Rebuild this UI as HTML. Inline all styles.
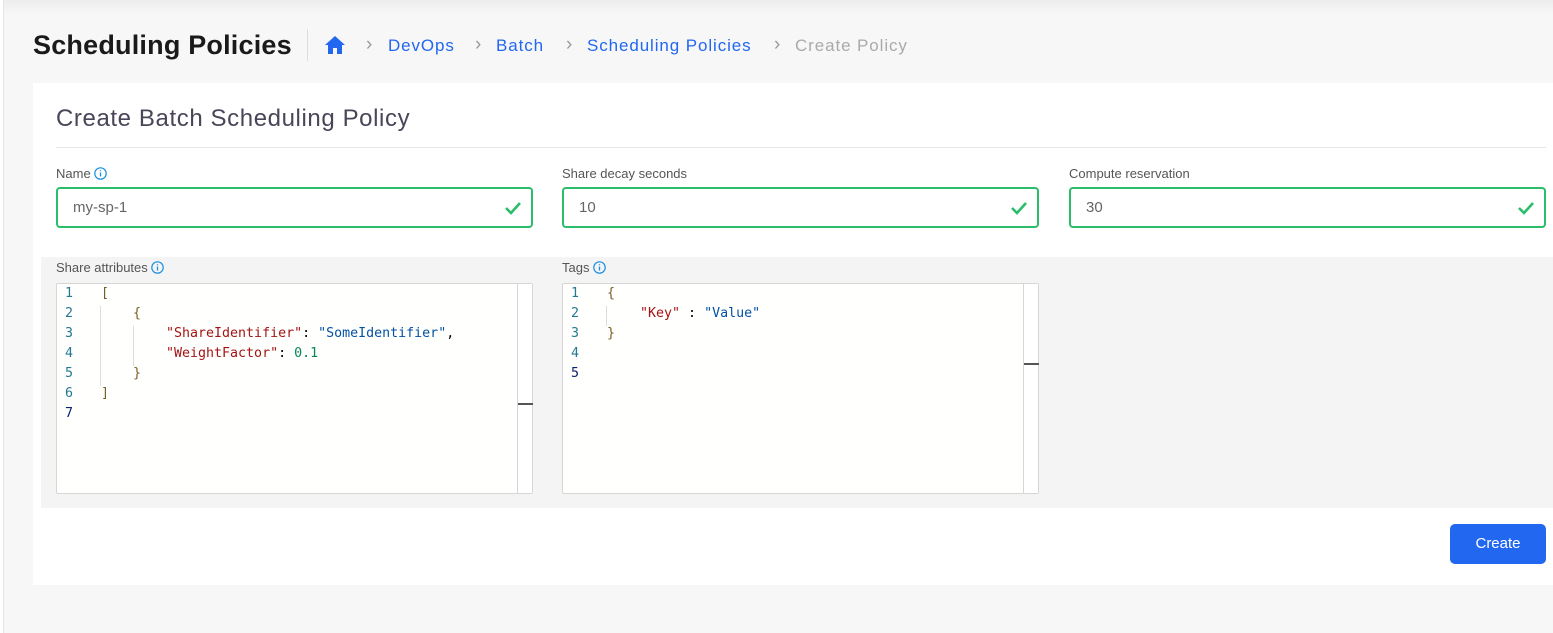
<!DOCTYPE html>
<html><head><meta charset="utf-8"><style>
*{box-sizing:border-box;margin:0;padding:0}
body{width:1553px;height:633px;background:#f7f7f7;font-family:"Liberation Sans",sans-serif;position:relative;overflow:hidden}
.leftb{position:absolute;left:0;top:0;width:4px;height:633px;background:#fff;border-right:1px solid #e6e6e6}
.topsh{position:absolute;left:4px;top:0;right:0;height:14px;background:linear-gradient(#ececec,#f7f7f7)}
.abs{position:absolute}
h1{position:absolute;left:33px;top:30px;font-size:27px;font-weight:bold;color:#1a1a1a;letter-spacing:0.2px}
.sep{position:absolute;left:307px;top:29px;width:1px;height:32px;background:#ddd}
.bc{position:absolute;top:36px;font-size:17px;color:#2167f0;letter-spacing:0.9px}
.chev{position:absolute;top:34px;font-size:19px;color:#999}
.card{position:absolute;left:33px;top:83px;width:1520px;height:502px;background:#fff}
.ct{position:absolute;left:56px;top:105px;font-size:24px;color:#4a4558;letter-spacing:0.6px}
.hr{position:absolute;left:56px;top:147px;width:1490px;height:1px;background:#e6e6e6}
.lbl{position:absolute;font-size:13px;color:#555}
.inp{position:absolute;top:187px;width:477px;height:41px;border:2px solid #2bbd6a;border-radius:4px;font-size:15px;color:#666;padding:10px 0 0 15px}
.inp svg{position:absolute;right:9px;top:11px}
.gray{position:absolute;left:41px;top:257px;width:1512px;height:251px;background:#f4f4f4}
.ed{position:absolute;top:283px;width:477px;height:211px;background:#fffffd;border:1px solid #d6d6d6;border-radius:2px;font-family:"DejaVu Sans Mono","Liberation Mono",monospace;font-size:13.3px}
.sb{position:absolute;right:0;top:0;width:15px;height:100%;border-left:1px solid #d6d6d6;background:#fff}
.sb i{position:absolute;left:0;width:15px;height:2px;background:#555}
.ln{position:absolute;left:8px;color:#237893;top:0}
.cd{position:absolute;white-space:pre;color:#000}
.k{color:#a31515}.s{color:#0451a5}.n{color:#098658}.b{color:#795e26}
.guide{position:absolute;width:1px;background:#ddd}
.btn{position:absolute;left:1450px;top:524px;width:96px;height:40px;background:#2167f0;border-radius:5px;color:#fff;font-size:15px;text-align:center;line-height:40px}
</style></head><body>
<div class="leftb"></div><div class="topsh"></div>
<h1>Scheduling Policies</h1>
<div class="sep"></div>
<svg class="abs" style="left:324px;top:35px" width="22" height="20" viewBox="0 0 22 20"><path d="M11 1L1 10h3v9h5v-6h4v6h5v-9h3z" fill="#2167f0"/></svg>
<span class="chev" style="left:366px">›</span><span class="bc" style="left:388px">DevOps</span>
<span class="chev" style="left:475px">›</span><span class="bc" style="left:496px">Batch</span>
<span class="chev" style="left:566px">›</span><span class="bc" style="left:587px">Scheduling Policies</span>
<span class="chev" style="left:774px">›</span><span class="bc" style="left:795px;color:#aaa">Create Policy</span>
<div class="card"></div>
<div class="ct">Create Batch Scheduling Policy</div>
<div class="hr"></div>
<div class="lbl" style="left:56px;top:166px">Name <svg width="13" height="13" viewBox="0 0 13 13" style="vertical-align:-2px"><circle cx="6.5" cy="6.5" r="5.7" fill="none" stroke="#1a8fe0" stroke-width="1.2"/><path d="M6.5 5.5v4M6.5 3.3v1" stroke="#1a8fe0" stroke-width="1.3"/></svg></div>
<div class="lbl" style="left:562px;top:166px">Share decay seconds</div>
<div class="lbl" style="left:1069px;top:166px">Compute reservation</div>
<div class="inp" style="left:56px">my-sp-1<svg width="18" height="16" viewBox="0 0 18 16"><path d="M2 8l5 5L16 3" fill="none" stroke="#2bbd6a" stroke-width="2.6"/></svg></div>
<div class="inp" style="left:562px">10<svg width="18" height="16" viewBox="0 0 18 16"><path d="M2 8l5 5L16 3" fill="none" stroke="#2bbd6a" stroke-width="2.6"/></svg></div>
<div class="inp" style="left:1069px">30<svg width="18" height="16" viewBox="0 0 18 16"><path d="M2 8l5 5L16 3" fill="none" stroke="#2bbd6a" stroke-width="2.6"/></svg></div>
<div class="gray"></div>
<div class="lbl" style="left:56px;top:260px">Share attributes <svg width="13" height="13" viewBox="0 0 13 13" style="vertical-align:-2px"><circle cx="6.5" cy="6.5" r="5.7" fill="none" stroke="#1a8fe0" stroke-width="1.2"/><path d="M6.5 5.5v4M6.5 3.3v1" stroke="#1a8fe0" stroke-width="1.3"/></svg></div>
<div class="lbl" style="left:562px;top:260px">Tags <svg width="13" height="13" viewBox="0 0 13 13" style="vertical-align:-2px"><circle cx="6.5" cy="6.5" r="5.7" fill="none" stroke="#1a8fe0" stroke-width="1.2"/><path d="M6.5 5.5v4M6.5 3.3v1" stroke="#1a8fe0" stroke-width="1.3"/></svg></div>
<div class="ed" style="left:56px">
<div class="guide" style="left:43px;top:22px;height:80px"></div>
<div class="guide" style="left:76px;top:42px;height:40px"></div>
<div class="ln" style="top:2px">1</div><div class="ln" style="top:22px">2</div><div class="ln" style="top:42px">3</div><div class="ln" style="top:62px">4</div><div class="ln" style="top:82px">5</div><div class="ln" style="top:102px">6</div><div class="ln" style="top:122px;color:#0b216f">7</div>
<div class="cd" style="left:44px;top:2px"><span class="b">[</span></div>
<div class="cd" style="left:76px;top:22px"><span class="b">{</span></div>
<div class="cd" style="left:109px;top:42px"><span class="k">"ShareIdentifier"</span>: <span class="s">"SomeIdentifier"</span>,</div>
<div class="cd" style="left:109px;top:62px"><span class="k">"WeightFactor"</span>: <span class="n">0.1</span></div>
<div class="cd" style="left:76px;top:82px"><span class="b">}</span></div>
<div class="cd" style="left:44px;top:102px"><span class="b">]</span></div>
<div class="sb"><i style="top:119px"></i></div>
</div>
<div class="ed" style="left:562px">
<div class="guide" style="left:43px;top:22px;height:20px"></div>
<div class="ln" style="top:2px">1</div><div class="ln" style="top:22px">2</div><div class="ln" style="top:42px">3</div><div class="ln" style="top:62px">4</div><div class="ln" style="top:82px;color:#0b216f">5</div>
<div class="cd" style="left:44px;top:2px"><span class="b">{</span></div>
<div class="cd" style="left:77px;top:22px"><span class="k">"Key"</span> : <span class="s">"Value"</span></div>
<div class="cd" style="left:44px;top:42px"><span class="b">}</span></div>
<div class="sb"><i style="top:79px"></i></div>
</div>
<div class="btn">Create</div>
</body></html>
